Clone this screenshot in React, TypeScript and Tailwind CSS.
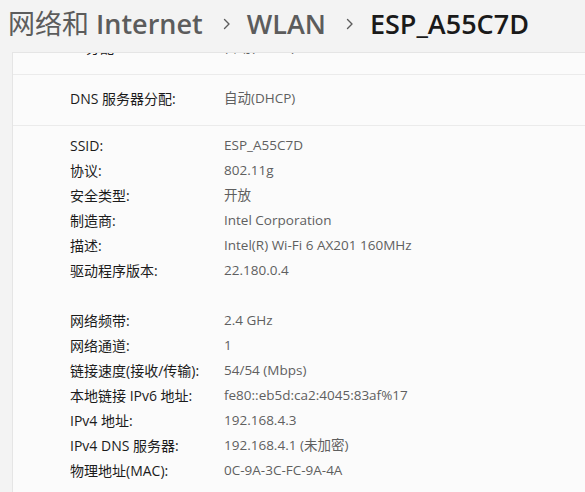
const font = {
  fontFamily: '"Open Sans", "Noto Sans CJK SC", sans-serif',
};

const Chevron = () => (
  <svg width="8" height="12" viewBox="0 0 8 12" className="ml-[20px] mr-[16px] mt-[1px] shrink-0">
    <polyline points="1.5,1.5 6,6 1.5,10.5" fill="none" stroke="#5c5c5c" strokeWidth="1.4" strokeLinecap="round" strokeLinejoin="round" />
  </svg>
);

type Row = [string, string];

const Field = ({ label, value }: { label: string; value: string }) => (
  <div className="flex h-[25px] items-center">
    <div className="w-[154px] shrink-0 text-[#1b1b1b]">{label}</div>
    <div className="text-[13.5px] text-[#5f5f5f]">{value}</div>
  </div>
);

const adapter: Row[] = [
  ["SSID:", "ESP_A55C7D"],
  ["协议:", "802.11g"],
  ["安全类型:", "开放"],
  ["制造商:", "Intel Corporation"],
  ["描述:", "Intel(R) Wi-Fi 6 AX201 160MHz"],
  ["驱动程序版本:", "22.180.0.4"],
];

const network: Row[] = [
  ["网络频带:", "2.4 GHz"],
  ["网络通道:", "1"],
  ["链接速度(接收/传输):", "54/54 (Mbps)"],
  ["本地链接 IPv6 地址:", "fe80::eb5d:ca2:4045:83af%17"],
  ["IPv4 地址:", "192.168.4.3"],
  ["IPv4 DNS 服务器:", "192.168.4.1 (未加密)"],
  ["物理地址(MAC):", "0C-9A-3C-FC-9A-4A"],
];

export default function App() {
  return (
    <div className="flex h-[492px] w-[585px] flex-col overflow-hidden bg-[#f3f3f3]" style={font}>
      <div className="flex h-[52px] shrink-0 items-center pb-[6px] pl-2 text-[27px] leading-none">
        <span className="text-[#5c5c5c]">
          网络和 <span className="font-semibold">Internet</span>
        </span>
        <Chevron />
        <span className="font-semibold text-[#5c5c5c]">WLAN</span>
        <Chevron />
        <span className="font-semibold text-[#1a1a1a]">ESP_A55C7D</span>
      </div>

      <div className="ml-[12px] flex-1 overflow-hidden border-l border-t border-[#e5e5e5] bg-[#fbfbfb] text-[14px]">
        <div className="-mt-[33px] flex h-[55px] items-center border-b border-[#ebebeb] pl-[57px]">
          <div className="w-[154px] shrink-0 text-[#1b1b1b]">IP 分配:</div>
          <div className="text-[13.5px] text-[#5f5f5f]">自动(DHCP)</div>
        </div>

        <div className="flex h-[51px] items-center border-b border-[#ebebeb] pb-[4px] pl-[57px]">
          <div className="w-[154px] shrink-0 text-[#1b1b1b]">DNS 服务器分配:</div>
          <div className="text-[13.5px] text-[#5f5f5f]">自动(DHCP)</div>
        </div>

        <div className="flex flex-col pl-[57px] pt-[7px]">
          {adapter.map(([l, v]) => (
            <Field key={l} label={l} value={v} />
          ))}
          <div className="h-[25px]" />
          {network.map(([l, v]) => (
            <Field key={l} label={l} value={v} />
          ))}
        </div>
      </div>
    </div>
  );
}
